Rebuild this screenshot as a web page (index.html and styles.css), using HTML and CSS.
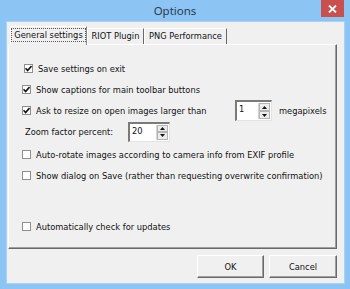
FILE: index.html
```html
<!DOCTYPE html>
<html>
  <head>
    <title>Options</title>
    <link rel="stylesheet" href="styles.css">
  </head>
  <body>
    <div class="window">
      <div class="titlebar">
        <span class="title">Options</span>
        <div class="close">
          <svg width="9" height="8" viewBox="0 0 9 8"><path d="M1 0.5 L8 7.5 M8 0.5 L1 7.5" stroke="#fff" stroke-width="1.8"/></svg>
        </div>
      </div>
      <div class="client">
        <div class="tabs">
          <div class="tab active"><span class="focus">General settings</span></div>
          <div class="tab riot">RIOT Plugin</div>
          <div class="tab png">PNG Performance</div>
        </div>
        <div class="panel">
          <div class="row first">
            <span class="check"><svg width="7" height="7" viewBox="0 0 7 7"><path d="M0.5 3.2 L2.6 5.5 L6.5 1" fill="none" stroke="#111" stroke-width="1.6"/></svg></span>
            <span>Save settings on exit</span>
          </div>
          <div class="row">
            <span class="check"><svg width="7" height="7" viewBox="0 0 7 7"><path d="M0.5 3.2 L2.6 5.5 L6.5 1" fill="none" stroke="#111" stroke-width="1.6"/></svg></span>
            <span>Show captions for main toolbar buttons</span>
          </div>
          <div class="row">
            <span class="check"><svg width="7" height="7" viewBox="0 0 7 7"><path d="M0.5 3.2 L2.6 5.5 L6.5 1" fill="none" stroke="#111" stroke-width="1.6"/></svg></span>
            <span class="resize-label">Ask to resize on open images larger than</span>
            <div class="spin small">
              <span class="value">1</span>
              <div class="arrows">
                <span class="arrow"><svg width="5" height="3" viewBox="0 0 5 3"><path d="M0 3 L2.5 0 L5 3 Z" fill="#111"/></svg></span>
                <span class="arrow"><svg width="5" height="3" viewBox="0 0 5 3"><path d="M0 0 L2.5 3 L5 0 Z" fill="#111"/></svg></span>
              </div>
            </div>
            <span class="unit">megapixels</span>
          </div>
          <div class="row zoom">
            <span class="zoom-label">Zoom factor percent:</span>
            <div class="spin wide">
              <span class="value">20</span>
              <div class="arrows">
                <span class="arrow"><svg width="5" height="3" viewBox="0 0 5 3"><path d="M0 3 L2.5 0 L5 3 Z" fill="#111"/></svg></span>
                <span class="arrow"><svg width="5" height="3" viewBox="0 0 5 3"><path d="M0 0 L2.5 3 L5 0 Z" fill="#111"/></svg></span>
              </div>
            </div>
          </div>
          <div class="row gap-top">
            <span class="check"></span>
            <span>Auto-rotate images according to camera info from EXIF profile</span>
          </div>
          <div class="row">
            <span class="check"></span>
            <span>Show dialog on Save (rather than requesting overwrite confirmation)</span>
          </div>
          <div class="row updates">
            <span class="check"></span>
            <span>Automatically check for updates</span>
          </div>
        </div>
        <div class="buttons">
          <div class="button ok">OK</div>
          <div class="button cancel">Cancel</div>
        </div>
      </div>
    </div>
  </body>
</html>
```

FILE: styles.css
```css
body {
  margin: 0;
  background-color: #8cc5f3;
  font-family: "DejaVu Sans", Verdana, sans-serif;
  font-size: 8.3px;
  color: #111;
}

div.window {
  width: 350px;
  height: 289px;
  background-color: #8cc5f3;
  position: relative;
  overflow: hidden;
}

div.titlebar {
  height: 22px;
  display: flex;
  align-items: center;
  justify-content: center;
}

div.titlebar span.title {
  font-family: "Noto Sans", "Open Sans", sans-serif;
  font-size: 11.5px;
  color: #2a3a4c;
  margin-top: -1px;
}

div.titlebar div.close {
  position: absolute;
  top: 0;
  left: 321px;
  width: 23px;
  height: 17px;
  background-color: #c9504e;
  display: flex;
  align-items: center;
  justify-content: center;
}

div.client {
  margin: 0 6px 0 7px;
  height: 261px;
  background-color: #f0f0f0;
  box-shadow: 0 0 0 1px #a9d2f5;
  display: flex;
  flex-direction: column;
  padding: 4px 7px 0 1px;
  box-sizing: border-box;
}

div.tabs {
  height: 18px;
  display: flex;
  align-items: flex-end;
  padding-left: 2px;
}

div.tab {
  height: 16px;
  box-sizing: border-box;
  display: flex;
  align-items: center;
  justify-content: center;
  border-top: 1px solid #fff;
  border-left: 1px solid #fff;
  border-right: 1px solid #696969;
  padding-bottom: 1px;
}

div.tab.active {
  width: 77px;
  height: 19px;
  margin-bottom: -1px;
  background-color: #f0f0f0;
  position: relative;
  z-index: 1;
  padding-bottom: 2px;
  border-right-color: #8a8a8a;
}

div.tab.active span.focus {
  border: 1px dotted #555;
  padding: 1px 2px;
}

div.tab.riot {
  width: 57px;
}

div.tab.png {
  width: 83px;
}

div.panel {
  height: 205px;
  box-sizing: border-box;
  border-top: 1px solid #fff;
  border-left: 1px solid #fff;
  border-right: 1px solid #696969;
  border-bottom: 1px solid #696969;
  box-shadow: inset -1px -1px 0 #a0a0a0;
  padding: 13px 0 0 13px;
  display: flex;
  flex-direction: column;
}

div.row {
  height: 21px;
  display: flex;
  align-items: center;
  white-space: nowrap;
}

div.row.first {
  padding-left: 2px;
}

div.row.zoom {
  padding-left: 3px;
}

div.row.gap-top {
  margin-top: 2px;
}

div.row.updates {
  margin-top: 30px;
}

span.check {
  width: 9px;
  height: 9px;
  box-sizing: border-box;
  border: 1px solid #8f8f8f;
  background-color: #fff;
  margin-right: 5px;
  display: flex;
  align-items: center;
  justify-content: center;
  flex-shrink: 0;
}

span.resize-label {
  width: 199px;
}

span.zoom-label {
  width: 103px;
}

div.spin {
  height: 21px;
  box-sizing: border-box;
  border-top: 2px solid #7a7a7a;
  border-left: 2px solid #7a7a7a;
  border-right: 1px solid #e3e3e3;
  border-bottom: 1px solid #e3e3e3;
  background-color: #fff;
  display: flex;
  align-items: stretch;
}

div.spin.small {
  width: 37px;
}

div.spin.wide {
  width: 42px;
  height: 20px;
}

div.spin span.value {
  flex: 1;
  padding: 2px 0 0 2px;
}

div.spin div.arrows {
  width: 11px;
  display: flex;
  flex-direction: column;
  border-left: 1px solid #d5d5d5;
  margin: 1px 1px 1px 0;
}

div.spin span.arrow {
  flex: 1;
  background-color: #ececec;
  border: 1px solid #b4b4b4;
  display: flex;
  align-items: center;
  justify-content: center;
}

span.unit {
  margin-left: 7px;
}

div.buttons {
  display: flex;
  justify-content: flex-end;
  gap: 5px;
  margin-top: 6px;
}

div.button {
  height: 23px;
  box-sizing: border-box;
  border-top: 1px solid #fff;
  border-left: 1px solid #fff;
  border-right: 1px solid #696969;
  border-bottom: 1px solid #696969;
  box-shadow: inset -1px -1px 0 #a0a0a0;
  display: flex;
  align-items: center;
  justify-content: center;
}

div.button.ok {
  width: 67px;
}

div.button.cancel {
  width: 68px;
}
```
